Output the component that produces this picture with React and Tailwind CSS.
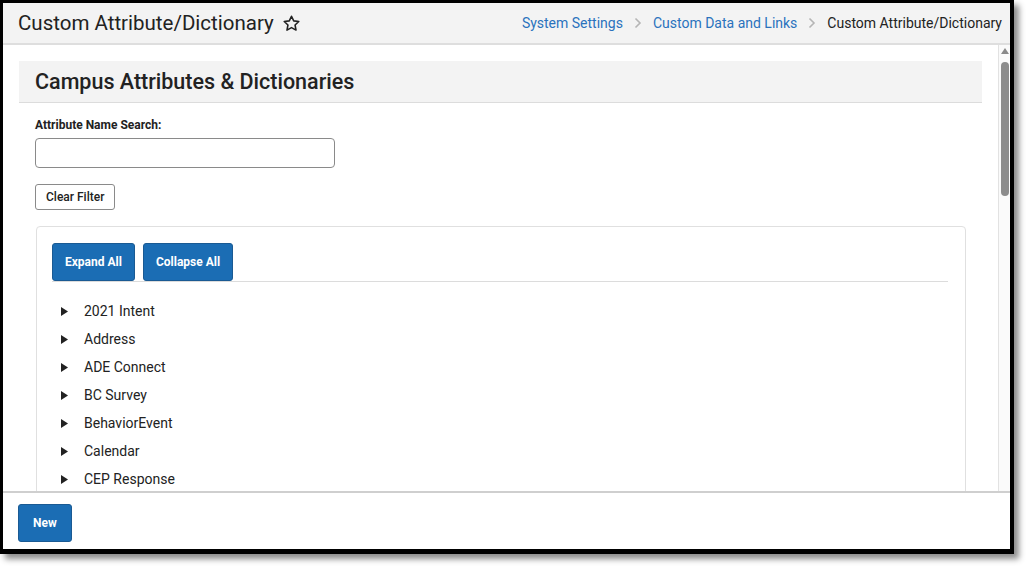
import React from "react";

const items = [
  "2021 Intent",
  "Address",
  "ADE Connect",
  "BC Survey",
  "BehaviorEvent",
  "Calendar",
  "CEP Response",
];

function Star() {
  return (
    <svg width="19" height="19" viewBox="0 0 24 24" fill="none" stroke="#222" strokeWidth="2" strokeLinejoin="round">
      <path d="M12 2.8l2.8 5.9 6.4.8-4.7 4.4 1.2 6.4L12 17.2l-5.7 3.1 1.2-6.4-4.7-4.4 6.4-.8z" />
    </svg>
  );
}

function Chevron() {
  return (
    <svg width="8" height="12" viewBox="0 0 8 12" fill="none" stroke="#b5b5b5" strokeWidth="1.6">
      <path d="M1.5 1.5L6 6l-4.5 4.5" />
    </svg>
  );
}

function Caret() {
  return (
    <svg width="7" height="9" viewBox="0 0 7 9">
      <path d="M0 0L7 4.5L0 9z" fill="#222" />
    </svg>
  );
}

export default function App() {
  return (
    <div className="w-[1029px] h-[571px] bg-white" style={{ fontFamily: "Roboto, 'Liberation Sans', sans-serif" }}>
      <div className="w-[1014px] h-[554px] border-l-[3px] border-t-[3px] border-r-[4px] border-b-[5px] border-black shadow-[5px_5px_6px_rgba(0,0,0,0.45)] flex flex-col bg-white overflow-hidden">
        {/* page header */}
        <div className="h-[42px] shrink-0 bg-[#f3f3f3] border-b-2 border-[#dedede] flex items-center justify-between pl-[15px] pr-[8px]">
          <div className="flex items-center gap-[8px]">
            <span className="text-[20.5px] text-[#222] leading-none">Custom Attribute/Dictionary</span>
            <Star />
          </div>
          <div className="flex items-center gap-[11px] text-[14px] leading-none">
            <span className="text-[#2a72bd]">System Settings</span>
            <Chevron />
            <span className="text-[#2a72bd]">Custom Data and Links</span>
            <Chevron />
            <span className="text-[#222]">Custom Attribute/Dictionary</span>
          </div>
        </div>

        {/* scrolling body */}
        <div className="flex flex-1 min-h-0">
          <div className="flex-1 min-w-0 overflow-hidden pt-[16px] pl-[16px] pr-[16px]">
            <div className="h-[42px] bg-[#f3f3f3] border-b border-[#dcdcdc] flex items-center pl-[16px]">
              <span className="text-[21.5px] font-medium text-[#222] leading-none">Campus Attributes &amp; Dictionaries</span>
            </div>
            <div className="pl-[16px] pr-[16px]">
              <div className="pt-[15px] text-[12px] font-bold text-[#222] leading-[14px]">Attribute Name Search:</div>
              <div className="mt-[6px] w-[300px] h-[30px] border border-[#8a8a8a] rounded-[4px] bg-white" />
              <button className="mt-[16px] h-[26px] px-[10px] border border-[#8a8a8a] rounded-[3px] bg-white text-[12px] font-medium text-[#222] leading-none">
                Clear Filter
              </button>
              <div className="mt-[16px] ml-[1px] border border-[#e0e0e0] rounded-[4px] pt-[16px] pl-[15px] pr-[17px] h-[300px]">
                <div className="flex gap-[8px] border-b border-[#dcdcdc]">
                  <button className="h-[38px] px-[12px] bg-[#1b6db4] border border-[#1a5a93] rounded-[3px] text-white text-[12px] font-bold leading-none">
                    Expand All
                  </button>
                  <button className="h-[38px] px-[12px] bg-[#1b6db4] border border-[#1a5a93] rounded-[3px] text-white text-[12px] font-bold leading-none">
                    Collapse All
                  </button>
                </div>
                <div className="pt-[15px]">
                  {items.map((t) => (
                    <div key={t} className="h-[28px] flex items-center pl-[9px]">
                      <Caret />
                      <span className="ml-[16px] text-[14px] text-[#222] leading-none">{t}</span>
                    </div>
                  ))}
                </div>
              </div>
            </div>
          </div>
          {/* scrollbar */}
          <div className="w-[12px] shrink-0 border-l border-[#e2e2e2] bg-[#fafafa] flex flex-col items-center pt-[3px]">
            <svg width="8" height="6" viewBox="0 0 8 6">
              <path d="M0 6L4 0L8 6z" fill="#8a8a8a" />
            </svg>
            <div className="mt-[8px] w-[8px] h-[134px] rounded-[4px] bg-[#8c8c8c]" />
          </div>
        </div>

        {/* footer */}
        <div className="h-[58px] shrink-0 border-t-2 border-[#cfcfcf] bg-white pl-[15px] pt-[11px]">
          <button className="h-[38px] w-[54px] bg-[#1b6db4] border border-[#1a5a93] rounded-[3px] text-white text-[12px] font-bold leading-none">
            New
          </button>
        </div>
      </div>
    </div>
  );
}
